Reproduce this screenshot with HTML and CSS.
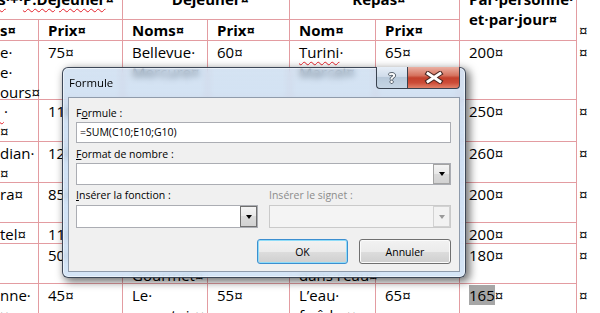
FILE: index.html
```html
<!DOCTYPE html>
<html lang="fr">
<head>
<meta charset="UTF-8">
<title>Formule</title>
<link rel="stylesheet" href="styles.css">
</head>
<body>

<div class="doc">
	<div class="c h1 first"><span><span class="sp">Hôtels</span>·+·<span class="sp">P.Dejeuner</span>¤</span></div>
	<div class="c h1 span2">Dejeuner¤</div>
	<div class="c h1 span2">Repas¤</div>
	<div class="c h1 par">Par·personne·<br>et·par·jour¤</div>
	<div class="end"></div>

	<div class="c c0 h2">s¤</div>
	<div class="c h2">Prix¤</div>
	<div class="c h2">Noms¤</div>
	<div class="c h2">Prix¤</div>
	<div class="c h2">Nom¤</div>
	<div class="c h2">Prix¤</div>
	<div class="end h2">¤</div>

	<div class="c c0">e·<br>e·<br>ours¤</div>
	<div class="c">75¤</div>
	<div class="c">Bellevue·<br>Mercure¤</div>
	<div class="c">60¤</div>
	<div class="c"><span class="sp">Turini</span>·<br>Marcel¤</div>
	<div class="c">65¤</div>
	<div class="c">200¤</div>
	<div class="end">¤</div>

	<div class="c c0"><span class="sp">&nbsp;</span>·<br>¤</div>
	<div class="c">110¤</div>
	<div class="c">Le·Lido¤</div>
	<div class="c">70¤</div>
	<div class="c">Chez·Rosa¤</div>
	<div class="c">70¤</div>
	<div class="c">250¤</div>
	<div class="end">¤</div>

	<div class="c c0">dian·<br>¤</div>
	<div class="c">120¤</div>
	<div class="c">Le·Nice¤</div>
	<div class="c">70¤</div>
	<div class="c">La·Treille¤</div>
	<div class="c">70¤</div>
	<div class="c">260¤</div>
	<div class="end">¤</div>

	<div class="c c0">ra¤</div>
	<div class="c">85¤</div>
	<div class="c">Le·Zinc¤</div>
	<div class="c">55¤</div>
	<div class="c">Le·Port¤</div>
	<div class="c">60¤</div>
	<div class="c">200¤</div>
	<div class="end">¤</div>

	<div class="c c0">tel¤</div>
	<div class="c">110¤</div>
	<div class="c">Le·Pin¤</div>
	<div class="c">45¤</div>
	<div class="c">Lou·Pais¤</div>
	<div class="c">45¤</div>
	<div class="c">200¤</div>
	<div class="end">¤</div>

	<div class="c c0"></div>
	<div class="c">50¤</div>
	<div class="c">Le·Petit·<br>Gourmet¤</div>
	<div class="c">65¤</div>
	<div class="c">Le·Bain·<br>dans·l’eau¤</div>
	<div class="c">65¤</div>
	<div class="c">180¤</div>
	<div class="end">¤</div>

	<div class="c c0">nne·<br>¤</div>
	<div class="c">45¤</div>
	<div class="c">Le·<br>comptoir¤</div>
	<div class="c">55¤</div>
	<div class="c">L’eau·<br>fraîche¤</div>
	<div class="c">65¤</div>
	<div class="c"><span class="hl">165</span>¤</div>
	<div class="end">¤</div>
</div>

<div class="dlg">
	<div class="bar">
		<span class="title">Formule</span>
		<div class="cap">
			<span class="cbtn help">?</span>
			<span class="cbtn close">
				<svg width="20" height="13" viewBox="0 0 20 13">
					<path d="M4 2.5 L16 10.5 M16 2.5 L4 10.5" stroke="#4a2722" stroke-width="5" stroke-linecap="square"/>
					<path d="M4 2.5 L16 10.5 M16 2.5 L4 10.5" stroke="#fff" stroke-width="2.8" stroke-linecap="square"/>
				</svg>
			</span>
		</div>
	</div>
	<div class="client">
		<span class="lbl first">F<u>o</u>rmule :</span>
		<div class="inp">=SUM(C10;E10;G10)</div>
		<span class="lbl"><u>F</u>ormat de nombre :</span>
		<div class="sel"><span class="arrow"><i></i></span></div>
		<div class="row">
			<div class="fld">
				<span class="lbl"><u>I</u>nsérer la fonction :</span>
				<div class="sel tall"><span class="arrow dark"><i></i></span></div>
			</div>
			<div class="fld off">
				<span class="lbl">Insérer le signet :</span>
				<div class="sel tall"><span class="arrow"><i></i></span></div>
			</div>
		</div>
		<div class="btns">
			<span class="btn ok">OK</span>
			<span class="btn cancel">Annuler</span>
		</div>
	</div>
</div>

</body>
</html>
```

FILE: styles.css
```css
*,
*::before,
*::after {
	margin: 0;
	padding: 0;
	box-sizing: border-box;
}
HTML, BODY {
	width: 100%;
	height: 100%;
}
BODY {
	position: relative;
	overflow: hidden;
	background: #fff;
	color: #000;
	font-family: "Open Sans", "Noto Sans", sans-serif;
}

/* word table in the back */
.doc {
	display: grid;
	grid-template-columns: 39px 84px 85px 82px 86px 84px 117px 23px;
	grid-template-rows: 40px 21px 59px 42px 41px 40px 21px 40px 60px;
	margin-top: -20px;
	font-size: 15px;
	line-height: 20px;
	overflow: hidden;
	height: 333px;
}
.c {
	border-right: 1px solid #e39ca1;
	border-bottom: 1px solid #e39ca1;
	padding: 1px 0 0 9px;
	white-space: nowrap;
}
.c0 { padding-left: 0; }
.end { padding: 1px 0 0 2px; }
.h1 {
	font-weight: bold;
	padding-top: 9px;
	text-align: center;
	overflow: hidden;
}
.h1.first {
	grid-column: 1 / 3;
	display: flex;
	justify-content: flex-end;
	align-items: flex-start;
	padding-right: 8px;
}
.h1.first > span { flex: none; }
.span2 { grid-column: span 2; }
.par {
	grid-column: 7;
	grid-row: 1 / 3;
	text-align: left;
}
.h2 {
	font-weight: bold;
	padding-top: 0;
}
.end.h2 { font-weight: normal; }
.sp {
	text-decoration: underline wavy #e3202a;
	text-decoration-thickness: 1px;
	text-underline-offset: 3px;
}
.hl { background: #a6a6a6; }

/* dialog */
.dlg {
	position: absolute;
	left: 62px;
	top: 67px;
	width: 404px;
	height: 211px;
	display: flex;
	flex-direction: column;
	padding: 0 5px 5px 5px;
	border: 1px solid rgba(35,45,60,.85);
	border-radius: 6px;
	background: linear-gradient(rgba(178,204,232,.55), rgba(196,218,242,.8) 40%, rgba(208,226,245,.9));
	backdrop-filter: blur(3px);
	box-shadow: inset 0 0 0 1px rgba(255,255,255,.5), 3px 3px 9px 1px rgba(0,0,0,.55);
}
.bar {
	height: 29px;
	display: flex;
	align-items: flex-start;
}
.title {
	flex: 1;
	font-size: 11.4px;
	line-height: 29px;
	padding-left: 1px;
}
.cap {
	display: flex;
	margin-top: -1px;
}
.cbtn {
	height: 22px;
	display: flex;
	align-items: center;
	justify-content: center;
	border: 1px solid #39424f;
	border-top: 0;
}
.help {
	width: 31px;
	border-right: 0;
	border-radius: 0 0 0 4px;
	background: linear-gradient(#e6eef7, #d0dcea 45%, #b8c9da 50%, #c6d5e4);
	color: #fff;
	font-size: 14px;
	font-weight: bold;
	line-height: 1;
	text-shadow: 1px 0 #59636e, -1px 0 #59636e, 0 1px #59636e, 0 -1px #59636e;
}
.close {
	width: 53px;
	border-radius: 0 0 4px 0;
	background: linear-gradient(#eab0a3, #d6735f 40%, #c3402c 52%, #cc4c37 75%, #e1826a);
}

.client {
	flex: 1;
	background: #f0f0f0;
	border: 1px solid #8f9bab;
	padding: 0 8px 0 7px;
	font-size: 10.5px;
}
.lbl {
	display: block;
	line-height: 15px;
	margin: 4px 0 1px;
}
.lbl.first { margin-top: 8px; }
.inp {
	height: 21px;
	border: 1px solid #abadb3;
	background: #fff;
	padding-left: 3px;
	line-height: 19px;
}
.sel {
	height: 22px;
	display: flex;
	justify-content: flex-end;
	border: 1px solid #abadb3;
	background: #fff;
}
.sel.tall { height: 23px; }
.arrow {
	width: 17px;
	display: flex;
	align-items: center;
	justify-content: center;
	border: 1px solid #a3a3a3;
	background: linear-gradient(#f4f4f4, #e8e8e8 50%, #dadada 50%, #d2d2d2);
}
.arrow.dark { border-color: #707070; }
.arrow i {
	width: 0;
	height: 0;
	border-style: solid;
	border-width: 4px 3.5px 0 3.5px;
	border-color: #000 transparent transparent transparent;
}
.row {
	display: flex;
	gap: 11px;
	margin-top: 3px;
}
.fld { width: 182px; }
.fld .lbl { margin: 0 0 2px; }
.off .lbl { color: #8c8c8c; }
.off .sel {
	background: #f4f4f4;
	border-color: #cacaca;
}
.off .arrow {
	border-color: #d2d2d2;
	background: #f2f2f2;
}
.off .arrow i { border-top-color: #9a9a9a; }

.btns {
	display: flex;
	justify-content: flex-end;
	gap: 11px;
	margin-top: 11px;
}
.btn {
	height: 25px;
	display: flex;
	align-items: center;
	justify-content: center;
	border-radius: 3px;
	background: linear-gradient(#f2f2f2, #ebebeb 50%, #dddddd 50%, #cfcfcf);
}
.ok {
	width: 91px;
	border: 1px solid #3c8fd0;
	box-shadow: inset 0 0 0 1px #8fdcf8;
}
.cancel {
	width: 92px;
	border: 1px solid #707070;
	box-shadow: inset 0 0 0 1px #fbfbfb;
}
```
